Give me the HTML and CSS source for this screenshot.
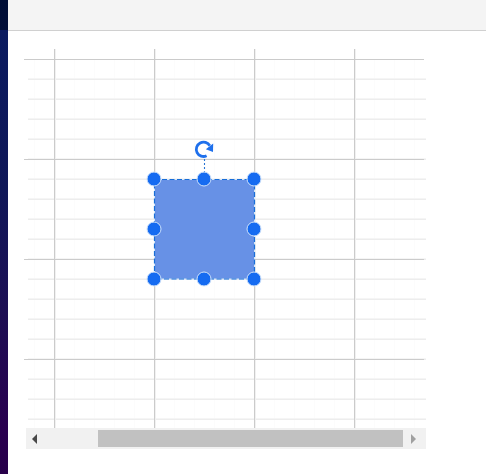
FILE: index.html
```html
<!DOCTYPE html>
<html lang="en">
<head>
<meta charset="utf-8">
<title>Diagram</title>
<link rel="stylesheet" href="styles.css">
</head>
<body>
<div class="app">
  <aside class="rail"><div class="rail-top"></div></aside>
  <main class="page">
    <header class="toolbar"></header>
    <section class="editor">
      <svg class="canvas" width="402" height="379" viewBox="24 49 402 379">
        <defs>
          <pattern id="minor" x="34" y="59" width="20" height="20" patternUnits="userSpaceOnUse">
            <rect class="minor-v" x="0" y="0" width="1" height="20"/>
            <rect class="minor-h" x="0" y="0" width="20" height="1"/>
            <rect class="minor-h soft" x="0" y="19" width="20" height="1"/>
          </pattern>
        </defs>
        <rect x="28" y="60" width="398" height="368" fill="url(#minor)"/>
        <path class="major-edge" d="M55.5 49V428M155.5 49V428M255.5 49V428M355.5 49V428"/>
        <path class="major" d="M24 59.5H424M24 159.5H424M24 259.5H424M24 359.5H424M54.5 49V428M154.5 49V428M254.5 49V428M354.5 49V428"/>
        <rect class="node" x="154" y="179" width="101" height="100"/>
        <rect class="node-gap" x="154.5" y="179.5" width="100" height="99.5"/>
        <rect class="node-border" x="154.5" y="179.5" width="100" height="99.5"/>
        <path class="stem" d="M204.5 159V173"/>
        <path class="turn" d="M206.6 155.8A7.2 7.2 0 1 1 209.8 145.8"/>
        <path class="turn-head" d="M205.8 149.2L213.2 143.4L213 151.9Z"/>
        <g class="handles">
          <circle cx="154" cy="179" r="7"/><circle cx="204" cy="179" r="7"/><circle cx="254" cy="179" r="7"/>
          <circle cx="154" cy="229" r="7"/><circle cx="254" cy="229" r="7"/>
          <circle cx="154" cy="279" r="7"/><circle cx="204" cy="279" r="7"/><circle cx="254" cy="279" r="7"/>
        </g>
      </svg>
      <div class="scrollbar">
        <svg class="arrow prev" width="5" height="10" viewBox="0 0 5 10"><path d="M5 0V10L0 5Z"/></svg>
        <div class="thumb"></div>
        <svg class="arrow next" width="5" height="10" viewBox="0 0 5 10"><path d="M0 0V10L5 5Z"/></svg>
      </div>
    </section>
  </main>
</div>
</body>
</html>
```

FILE: styles.css
```css
* { box-sizing: border-box; }
body { margin: 0; background: #fff; font-family: "Liberation Sans", sans-serif; overflow: hidden; }
.app { display: flex; height: 474px; }
.rail { width: 8px; flex: none; background: linear-gradient(#0b1b60 30px, #101758 190px, #1d0f54 310px, #2a0050 430px, #28004a); }
.rail-top { height: 30px; background: linear-gradient(#000e36, #020e38); }
.page { flex: 1; display: flex; flex-direction: column; }
.toolbar { height: 31px; background: #f4f4f4; border-bottom: 1px solid #d0d0d0; }
.editor { display: flex; flex-direction: column; padding: 18px 0 0 16px; }
.canvas { display: block; }
.minor-v { fill: #fcfcfc; }
.minor-h { fill: #ededed; }
.soft { fill: #f5f5f5; }
.major { stroke: #cbcbcb; stroke-width: 1; fill: none; }
.major-edge { stroke: #f1f1f1; stroke-width: 1; fill: none; }
.node { fill: #6791e6; }
.node-gap { fill: none; stroke: #d5e5f7; stroke-width: 1; }
.node-border { fill: none; stroke: #196ed8; stroke-width: 1.2; stroke-dasharray: 5 2.5; }
.stem { stroke: #2875d4; stroke-width: 1.1; stroke-dasharray: 2 2; }
.turn { fill: none; stroke: #1f70ec; stroke-width: 2.8; }
.turn-head { fill: #1f70ec; }
.handles circle { fill: #156bf1; stroke: #d0e3fb; stroke-width: 1; }
.scrollbar { display: flex; align-items: center; width: 400px; height: 21px; margin-left: 2px; padding: 0 10px 0 6px; background: #f1f1f1; }
.thumb { width: 305px; height: 17px; margin-left: 61px; background: #c1c1c1; }
.arrow { flex: none; }
.prev { fill: #484848; }
.next { fill: #a0a0a0; margin-left: 8px; }
```
